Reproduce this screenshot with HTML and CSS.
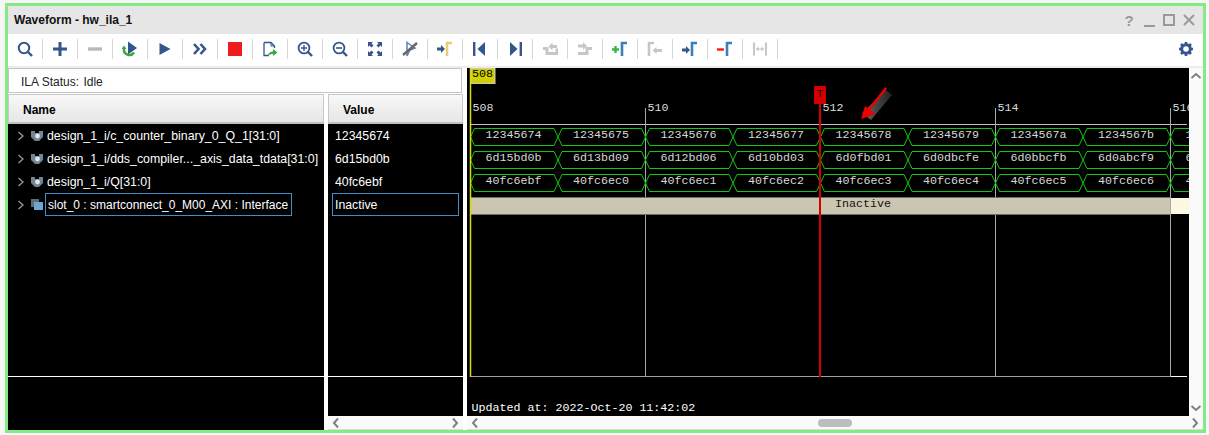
FILE: index.html
```html
<!DOCTYPE html>
<html lang="en">
<head>
	<meta charset="UTF-8">
	<title>Waveform - hw_ila_1</title>
	<link rel="stylesheet" href="styles.css">
</head>
<body>
<div class="window">
	<!-- title bar -->
	<header class="titlebar">
		<span class="title">Waveform - hw_ila_1</span>
		<div class="winBtns">
			<span class="help">?</span>
			<svg class="winIcon" viewBox="0 0 16 16"><path d="M3 14H14" stroke-width="2"/></svg>
			<svg class="winIcon" viewBox="0 0 16 16"><path d="M3 3H13V13H3Z" stroke-width="2"/></svg>
			<svg class="winIcon" viewBox="0 0 16 16"><path d="M3 3L13 13M13 3L3 13" stroke-width="2"/></svg>
		</div>
	</header>

	<!-- toolbar -->
	<nav class="toolbar">
		<div class="tool"><svg viewBox="0 0 16 16"><circle cx="7" cy="7" r="5.2" fill="none" stroke="#34568b" stroke-width="2"/><path d="M11 11L15 15" stroke="#34568b" stroke-width="2.4"/></svg></div>
		<div class="tool"><svg viewBox="0 0 16 16"><path d="M1 8H15M8 1V15" stroke="#34568b" stroke-width="3"/></svg></div>
		<div class="tool"><svg viewBox="0 0 16 16"><path d="M1 8H15" stroke="#b9b9b9" stroke-width="3.4"/></svg></div>
		<div class="tool"><svg viewBox="0 0 16 16"><path d="M6 0.500L15 7L6 13.500Z" fill="#34568b"/><path d="M2 7.500A5.500 5.500 0 0 0 12 11.500" fill="none" stroke="#3aa83f" stroke-width="2.400"/><path d="M-0.500 8H4.500L2 4.500Z" fill="#3aa83f"/></svg></div>
		<div class="tool"><svg viewBox="0 0 16 16"><path d="M2.500 2L13.500 8L2.500 14Z" fill="#34568b"/></svg></div>
		<div class="tool"><svg viewBox="0 0 16 16"><path d="M2 3L6.500 8L2 13M8.500 3L13 8L8.500 13" fill="none" stroke="#34568b" stroke-width="2.600"/></svg></div>
		<div class="tool"><svg viewBox="0 0 16 16"><rect x="1" y="1" width="14" height="14" fill="#ee1c1c"/></svg></div>
		<div class="tool"><svg viewBox="0 0 16 16"><path d="M2 1.500H9L12.500 5V7M2 1.500V14.500H7" fill="none" stroke="#34568b" stroke-width="1.300"/><path d="M9 1.500V5H12.500" fill="none" stroke="#34568b"/><path d="M6 15C6.500 11.500 9 10.500 11 10.500V8L15.500 11.500L11 15V13C9 13 7.500 13.500 6 15Z" fill="#3aa83f"/></svg></div>
		<div class="tool"><svg viewBox="0 0 16 16"><circle cx="7" cy="7" r="5.400" fill="none" stroke="#34568b" stroke-width="1.800"/><path d="M4 7H10M7 4V10" stroke="#34568b" stroke-width="1.400"/><path d="M11 11L15 15" stroke="#34568b" stroke-width="2.400"/></svg></div>
		<div class="tool"><svg viewBox="0 0 16 16"><circle cx="7" cy="7" r="5.400" fill="none" stroke="#34568b" stroke-width="1.800"/><path d="M4 7H10" stroke="#34568b" stroke-width="1.600"/><path d="M11 11L15 15" stroke="#34568b" stroke-width="2.400"/></svg></div>
		<div class="tool"><svg viewBox="0 0 16 16"><path d="M1 1H6L4.500 2.500L6.500 4.500L4.500 6.500L2.500 4.500L1 6ZM15 1V6L13.500 4.500L11.500 6.500L9.500 4.500L11.500 2.500L10 1ZM1 15V10L2.500 11.500L4.500 9.500L6.500 11.500L4.500 13.500L6 15ZM15 15H10L11.500 13.500L9.500 11.500L11.500 9.500L13.500 11.500L15 10Z" fill="#34568b"/></svg></div>
		<div class="tool"><svg viewBox="0 0 16 16"><path d="M5 1.500L13 7L8 9L5 15Z" fill="none" stroke="#5f7fb0" stroke-width="1.500"/><path d="M1 14L15 2" stroke="#666" stroke-width="2.400"/></svg></div>
		<div class="tool"><svg viewBox="0 0 16 16"><path d="M0 6.500H4V4L8 8L4 12V9.500H0Z" fill="#34568b"/><path d="M10 15V2H15" fill="none" stroke="#e8cc70" stroke-width="2.600"/></svg></div>
		<div class="tool"><svg viewBox="0 0 16 16"><rect x="1" y="1" width="2.400" height="14" fill="#34568b"/><path d="M13 1V15L5.500 8Z" fill="#34568b"/></svg></div>
		<div class="tool"><svg viewBox="0 0 16 16"><path d="M3 1V15L10.500 8Z" fill="#34568b"/><rect x="12.600" y="1" width="2.400" height="14" fill="#34568b"/></svg></div>
		<div class="tool"><svg viewBox="0 0 16 16"><path d="M1 7.500H5V12.500H15V7.500" fill="none" stroke="#c6c6c6" stroke-width="3"/><path d="M6.500 5.500L10.500 1.500V4H15V7H10.500V9.500Z" fill="#c6c6c6"/></svg></div>
		<div class="tool"><svg viewBox="0 0 16 16"><path d="M1 3.500H6V6.500H1ZM6 1L10 5L6 9Z" fill="#c6c6c6"/><path d="M1 12.500H10V7.500H15" fill="none" stroke="#c6c6c6" stroke-width="3"/></svg></div>
		<div class="tool"><svg viewBox="0 0 16 16"><path d="M0 8.500H7M3.500 5V12" stroke="#3fb24a" stroke-width="2.400"/><path d="M10 15V2H15" fill="none" stroke="#3a7fb5" stroke-width="2.600"/></svg></div>
		<div class="tool"><svg viewBox="0 0 16 16"><path d="M2 15V2H7" fill="none" stroke="#c6c6c6" stroke-width="2.600"/><path d="M5.500 9.500L9.500 6V8H15V11H9.500V13Z" fill="#c6c6c6"/></svg></div>
		<div class="tool"><svg viewBox="0 0 16 16"><path d="M0 7.500H4V5L8 9L4 13V10.500H0Z" fill="#34568b"/><path d="M10 15V2H15" fill="none" stroke="#3a7fb5" stroke-width="2.600"/></svg></div>
		<div class="tool"><svg viewBox="0 0 16 16"><path d="M0 8.500H7" stroke="#ee1c1c" stroke-width="2.400"/><path d="M10 15V2H15" fill="none" stroke="#3a7fb5" stroke-width="2.600"/></svg></div>
		<div class="tool"><svg viewBox="0 0 16 16"><path d="M2 1.500V14.500M14 1.500V14.500" stroke="#c6c6c6" stroke-width="2"/><path d="M4 8H12" stroke="#c6c6c6" stroke-width="1.200"/><path d="M4 8L6.500 5.500V10.500ZM12 8L9.500 5.500V10.500Z" fill="#c6c6c6"/></svg></div>
		<div class="gear"><svg viewBox="0 0 16 16"><circle cx="8" cy="8" r="4.300" fill="none" stroke="#34568b" stroke-width="3"/><path d="M8 1V3.500M8 12.500V15M1 8H3.500M12.500 8H15M3 3L4.800 4.800M11.200 11.200L13 13M13 3L11.200 4.800M4.800 11.200L3 13" stroke="#34568b" stroke-width="2.600"/></svg></div>
	</nav>

	<main class="panes">
		<!-- names and values -->
		<section class="leftPane">
			<div class="statusBox"><span class="statusLabel">ILA Status:</span> Idle</div>
			<div class="columns">
				<div class="col">
					<div class="colHead">Name</div>
					<div class="colBody">
						<div class="colRows">
							<div class="nameRow">
								<svg class="chev" viewBox="0 0 8 10"><path d="M1.500 1L6 5L1.500 9"/></svg>
								<svg class="sigIcon" viewBox="0 0 12 12"><use href="#busIcon"/></svg>
								<span class="label">design_1_i/c_counter_binary_0_Q_1[31:0]</span>
							</div>
							<div class="nameRow">
								<svg class="chev" viewBox="0 0 8 10"><path d="M1.500 1L6 5L1.500 9"/></svg>
								<svg class="sigIcon" viewBox="0 0 12 12"><use href="#busIcon"/></svg>
								<span class="label">design_1_i/dds_compiler..._axis_data_tdata[31:0]</span>
							</div>
							<div class="nameRow">
								<svg class="chev" viewBox="0 0 8 10"><path d="M1.500 1L6 5L1.500 9"/></svg>
								<svg class="sigIcon" viewBox="0 0 12 12"><use href="#busIcon"/></svg>
								<span class="label">design_1_i/Q[31:0]</span>
							</div>
							<div class="nameRow">
								<svg class="chev" viewBox="0 0 8 10"><path d="M1.500 1L6 5L1.500 9"/></svg>
								<svg class="sigIcon" viewBox="0 0 12 12"><rect x="0" y="0" width="8" height="8" fill="#5d6b78"/><rect x="3" y="3" width="9" height="8" fill="#6fa6d0"/></svg>
								<span class="label selected">slot_0 : smartconnect_0_M00_AXI : Interface</span>
							</div>
						</div>
						<div class="colFoot"></div>
					</div>
				</div>
				<div class="col">
					<div class="colHead valueHead">Value</div>
					<div class="colBody">
						<div class="colRows">
							<div class="valueRow">12345674</div>
							<div class="valueRow">6d15bd0b</div>
							<div class="valueRow">40fc6ebf</div>
							<div class="valueRow"><span class="valueBox">Inactive</span></div>
						</div>
						<div class="colFoot"></div>
					</div>
					<div class="hScroll">
						<svg class="arrow" viewBox="0 0 10 12"><path d="M7 1.500L3 6L7 10.500"/></svg>
						<svg class="arrow" viewBox="0 0 10 12"><path d="M3 1.500L7 6L3 10.500"/></svg>
					</div>
				</div>
			</div>
		</section>

		<!-- waveform canvas -->
		<section class="wavePane">
			<div class="waveRow">
				<svg class="wave" viewBox="467 68 722 348">
					<defs>
						<linearGradient id="shadowGrad" x1="0" y1="0" x2="1" y2="0">
							<stop offset="0" stop-color="#666"/>
							<stop offset="1" stop-color="#222"/>
						</linearGradient>
						<path id="seg" d="M4 0H83.500L87.500 8.500L83.500 17H4L0 8.500Z"/>
						<g id="busRow" class="busSeg">
							<use href="#seg" x="470.500"/><use href="#seg" x="558"/><use href="#seg" x="645.500"/>
							<use href="#seg" x="733"/><use href="#seg" x="820.500"/><use href="#seg" x="908"/>
							<use href="#seg" x="995.500"/><use href="#seg" x="1083"/><use href="#seg" x="1170.500"/>
						</g>
					</defs>

					<!-- cursor label and ruler -->
					<rect class="cursorTag" x="471" y="68.500" width="24" height="15"/>
					<text class="tagText" x="472" y="77">508</text>
					<path class="ruler" d="M470 124.500H1187"/>
					<path class="grid" d="M645.500 108V377M995.500 108V377M1170.500 108V377"/>
					<text class="rulerText" x="472.500" y="111">508</text>
					<text class="rulerText" x="647.500" y="111">510</text>
					<text class="rulerText" x="822.500" y="111">512</text>
					<text class="rulerText" x="997.500" y="111">514</text>
					<text class="rulerText" x="1172.500" y="111">516</text>

					<!-- bus rows -->
					<use href="#busRow" y="128.500"/>
					<use href="#busRow" y="151.500"/>
					<use href="#busRow" y="174.500"/>
					<g class="busText">
						<text x="513.500" y="138">12345674</text><text x="601" y="138">12345675</text><text x="688.500" y="138">12345676</text>
						<text x="776" y="138">12345677</text><text x="863.500" y="138">12345678</text><text x="951" y="138">12345679</text>
						<text x="1038.500" y="138">1234567a</text><text x="1126" y="138">1234567b</text><text x="1213.500" y="138">1234567c</text>
						<text x="513.500" y="161">6d15bd0b</text><text x="601" y="161">6d13bd09</text><text x="688.500" y="161">6d12bd06</text>
						<text x="776" y="161">6d10bd03</text><text x="863.500" y="161">6d0fbd01</text><text x="951" y="161">6d0dbcfe</text>
						<text x="1038.500" y="161">6d0bbcfb</text><text x="1126" y="161">6d0abcf9</text><text x="1213.500" y="161">6d09bcf6</text>
						<text x="513.500" y="184">40fc6ebf</text><text x="601" y="184">40fc6ec0</text><text x="688.500" y="184">40fc6ec1</text>
						<text x="776" y="184">40fc6ec2</text><text x="863.500" y="184">40fc6ec3</text><text x="951" y="184">40fc6ec4</text>
						<text x="1038.500" y="184">40fc6ec5</text><text x="1126" y="184">40fc6ec6</text><text x="1213.500" y="184">40fc6ec7</text>
					</g>

					<!-- inactive slot -->
					<rect class="slotBar" x="470.500" y="197.500" width="700" height="17"/>
					<rect class="slotEnd" x="1171" y="198" width="18" height="16"/>
					<path class="grid" d="M1170.500 197V215"/>
					<text class="slotText" x="863" y="207">Inactive</text>

					<path class="gridEnd" d="M470 376.500H1170"/>
					<path class="gridEndLight" d="M1171 376.500H1187"/>
					<path class="yellowCursor" d="M470.500 68V377"/>

					<!-- trigger marker -->
					<rect class="marker" x="814" y="86" width="12" height="18"/>
					<path class="markerLine" d="M820 104V377"/>
					<text class="markerText" x="820" y="97">T</text>

					<!-- hand drawn arrow -->
					<path d="M886 90L892 95L871 120L862 113Z" fill="url(#shadowGrad)"/>
					<path d="M886 88L868 111" stroke="#f00000" stroke-width="2.400"/>
					<path d="M861 119L865 106L875 114Z" fill="#f00000"/>

					<text class="updated" x="471.500" y="411">Updated at: 2022-Oct-20 11:42:02</text>
				</svg>
				<div class="vScroll">
					<svg class="arrow" viewBox="0 0 12 10"><path d="M1.500 7L6 3L10.500 7"/></svg>
					<svg class="arrow" viewBox="0 0 12 10"><path d="M1.500 3L6 7L10.500 3"/></svg>
				</div>
			</div>
			<div class="hScroll">
				<svg class="arrow" viewBox="0 0 10 12"><path d="M7 1.500L3 6L7 10.500"/></svg>
				<div class="thumb"></div>
				<svg class="arrow" viewBox="0 0 10 12"><path d="M3 1.500L7 6L3 10.500"/></svg>
			</div>
		</section>
	</main>
</div>

<!-- shared signal icon -->
<svg class="iconDefs" aria-hidden="true">
	<defs>
		<g id="busIcon">
			<path d="M0 1H4V3H8V1H12V7L8 11H4L0 7Z" fill="#74848f"/>
			<circle cx="6.500" cy="6" r="2.400" fill="#dfe6ea"/>
		</g>
	</defs>
</svg>
</body>
</html>
```

FILE: styles.css
```css
* {
	box-sizing: border-box;
}
html,
body {
	width: 100%;
	height: 100%;
	margin: 0;
	padding: 0;
	overflow: hidden;
}
body {
	background: #f6f6f6;
	font-family: "Liberation Sans", Arial, sans-serif;
	font-size: 12px;
	color: #000;
	padding: 3px 3px 2px 5px;
}
.window {
	display: flex;
	flex-direction: column;
	height: 430px;
	border: 3px solid #85e985;
	background: #fff;
}

/* title bar */
.titlebar {
	display: flex;
	align-items: center;
	justify-content: space-between;
	height: 28px;
	flex: none;
	padding: 0 6px;
	background: #e6e6e6;
}
.title {
	font-size: 12px;
	font-weight: bold;
	color: #111;
}
.winBtns {
	display: flex;
	align-items: center;
	gap: 4px;
}
.help {
	width: 16px;
	text-align: center;
	font-size: 15px;
	font-weight: bold;
	color: #9a9a9a;
}
.winIcon {
	width: 16px;
	height: 16px;
	fill: none;
	stroke: #9a9a9a;
}

/* toolbar */
.toolbar {
	display: flex;
	align-items: center;
	height: 34px;
	flex: none;
	padding-bottom: 2px;
	border-bottom: 2px solid #ececec;
}
.tool {
	display: flex;
	align-items: center;
	justify-content: center;
	width: 35px;
	height: 20px;
	flex: none;
	border-right: 1px solid #d6d6d6;
}
.tool svg {
	width: 16px;
	height: 16px;
}
.gear {
	display: flex;
	margin-left: auto;
	margin-right: 9px;
}
.gear svg {
	width: 16px;
	height: 16px;
}

/* panes */
.panes {
	display: flex;
	flex: 1;
	min-height: 0;
	gap: 4px;
}
.leftPane {
	display: flex;
	flex-direction: column;
	width: 455px;
	flex: none;
}
.statusBox {
	height: 25px;
	margin-right: 1px;
	flex: none;
	padding: 6px 0 0 12px;
	border: 1px solid #c4c4c4;
	color: #222;
}
.statusLabel {
	margin-right: 1px;
}
.columns {
	display: grid;
	grid-template-columns: 316px 135px;
	gap: 4px;
	flex: 1;
	min-height: 0;
	margin-top: 1px;
}
.col {
	display: flex;
	flex-direction: column;
	min-height: 0;
}
.colHead {
	height: 30px;
	flex: none;
	padding: 8px 0 0 14px;
	background: linear-gradient(#f8f8f8, #e6e6e6);
	border: 1px solid #c8c8c8;
	border-bottom: 2px solid #c0c0c0;
	font-weight: bold;
}
.valueHead {
	padding-left: 14px;
}
.colBody {
	display: flex;
	flex-direction: column;
	flex: 1;
	min-height: 0;
	background: #000;
	color: #fff;
}
.colRows {
	height: 253px;
	flex: none;
	border-bottom: 1px solid #fff;
}
.colFoot {
	flex: 1;
}
.nameRow {
	display: flex;
	align-items: center;
	height: 23px;
	padding-left: 9px;
	white-space: nowrap;
	font-size: 12.35px;
}
.chev {
	width: 8px;
	height: 10px;
	flex: none;
	margin-right: 6px;
	fill: none;
	stroke: #9a9a9a;
	stroke-width: 1.3;
}
.sigIcon {
	width: 12px;
	height: 12px;
	flex: none;
	margin-right: 2px;
}
.label {
	display: flex;
	align-items: center;
	height: 23px;
	padding: 0 3px 0 1px;
	border: 1px solid transparent;
}
.label.selected {
	font-size: 12px;
	padding-left: 2px;
	border-color: #3d8fc8;
}
.valueRow {
	display: flex;
	align-items: center;
	height: 23px;
	padding-left: 7px;
	font-size: 12.3px;
}
.valueBox {
	display: flex;
	align-items: center;
	width: 127px;
	height: 23px;
	margin-left: -3px;
	padding-left: 2px;
	border: 1px solid #3d8fc8;
}

/* scroll bars */
.hScroll {
	display: flex;
	align-items: center;
	justify-content: space-between;
	height: 14px;
	flex: none;
	padding: 0 3px;
	background: #fafafa;
	border-bottom: 1px solid #dcdcdc;
}
.vScroll {
	display: flex;
	flex-direction: column;
	align-items: center;
	justify-content: space-between;
	width: 14px;
	flex: none;
	padding: 3px 0;
	background: #fafafa;
}
.arrow {
	width: 10px;
	height: 12px;
	fill: none;
	stroke: #808080;
	stroke-width: 2;
}
.vScroll .arrow {
	width: 12px;
	height: 10px;
}
.thumb {
	width: 34px;
	height: 8px;
	margin-left: 338px;
	margin-right: auto;
	background: #bdbdbd;
	border-radius: 4px;
}

/* waveform */
.wavePane {
	display: flex;
	flex-direction: column;
	flex: 1;
	min-width: 0;
}
.waveRow {
	display: flex;
	flex: 1;
	min-height: 0;
}
.wave {
	display: block;
	width: 722px;
	height: 348px;
	flex: none;
	background: #000;
	font-family: "Liberation Mono", "Courier New", monospace;
	font-size: 11.67px;
}
.cursorTag {
	fill: #d0d000;
	stroke: #c8c8c8;
}
.tagText {
	fill: #000;
}
.rulerText {
	fill: #dcdcdc;
}
.ruler {
	stroke: #c0c0c0;
	fill: none;
}
.grid {
	stroke: #a8a8a8;
	fill: none;
}
.busSeg {
	fill: none;
	stroke: #10c810;
}
.busText text {
	fill: #d8d8d8;
	text-anchor: middle;
}
.slotBar {
	fill: #ccc5af;
	stroke: #6e6e6e;
}
.slotEnd {
	fill: #fff8e0;
}
.slotText {
	fill: #111;
	text-anchor: middle;
}
.gridEnd {
	stroke: #a0a0a0;
}
.gridEndLight {
	stroke: #fff;
}
.yellowCursor {
	stroke: #dcdc00;
	stroke-width: 1.5;
}
.marker {
	fill: #d40000;
}
.markerLine {
	stroke: #d40000;
	stroke-width: 2;
}
.markerText {
	fill: #300;
	text-anchor: middle;
}
.updated {
	fill: #fff;
}
.iconDefs {
	position: absolute;
	width: 0;
	height: 0;
}
```
